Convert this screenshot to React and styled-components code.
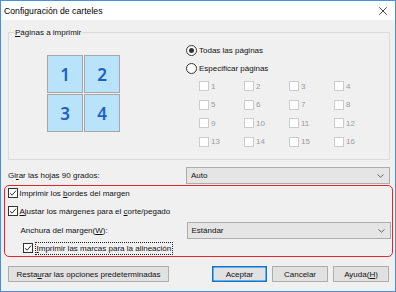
import React from 'react'
import styled, { createGlobalStyle, css } from 'styled-components'

const GlobalStyle = createGlobalStyle`
  html, body {
    margin: 0;
    padding: 0;
    background: #ffffff;
  }
  body {
    font-family: "Liberation Sans", Arial, sans-serif;
    color: #111;
  }
`

// ventana principal del dialogo
const Window = styled.div`
  width: 396px;
  height: 292px;
  box-sizing: border-box;
  border: 1px solid #4a90d9;
  display: flex;
  flex-direction: column;
  background: #f0f0f0;
  overflow: hidden;
`

const TitleBar = styled.div`
  height: 19px;
  flex: none;
  background: #ffffff;
  display: flex;
  align-items: center;
  justify-content: space-between;
  padding: 0 8px 0 3px;
  font-size: 8.7px;
  color: #000;
`

const Body = styled.div`
  flex: 1;
  display: flex;
  flex-direction: column;
  padding: 7px 5px 0 7px;
  font-size: 8px;
`

const Group = styled.fieldset`
  margin: 0;
  padding: 0;
  border: 1px solid #dcdcdc;
  min-width: 0;
`

const Legend = styled.legend`
  margin-left: 5px;
  padding: 0 1px;
  font-size: 8px;
  line-height: 11px;
`

const GroupInner = styled.div`
  display: flex;
  padding: 3px 0 8px 38px;
`

const TileGrid = styled.div`
  margin-top: 14px;
  align-self: flex-start;
  display: grid;
  grid-template-columns: 36px 36px;
  grid-auto-rows: 38px;
  gap: 1px;
`

const Tile = styled.div`
  box-sizing: border-box;
  background: #b9e2fb;
  border: 1px solid #a6a6a6;
  display: flex;
  align-items: center;
  justify-content: center;
  color: #1d5fc4;
  font-family: "Noto Sans", "Open Sans", sans-serif;
  font-weight: 600;
  font-size: 17px;
`

const PageOptions = styled.div`
  margin-left: 66px;
  display: flex;
  flex-direction: column;
`

const RadioRow = styled.label`
  height: 18px;
  display: flex;
  align-items: center;
`

const Radio = styled.span`
  width: 11px;
  height: 11px;
  box-sizing: border-box;
  border-radius: 50%;
  border: 1px solid #333;
  background: #fff;
  display: flex;
  align-items: center;
  justify-content: center;
  margin-right: 2px;

  &::after {
    content: '';
    width: 5px;
    height: 5px;
    border-radius: 50%;
    background: ${p => (p.$checked ? '#333' : 'transparent')};
  }
`

const PageGrid = styled.div`
  margin-left: 13px;
  display: grid;
  grid-template-columns: repeat(4, 45px);
  grid-auto-rows: 18.5px;
`

const PageCell = styled.div`
  display: flex;
  align-items: center;
  color: #9c9c9c;
`

const Box = styled.span`
  width: 10px;
  height: 10px;
  box-sizing: border-box;
  flex: none;
  background: #fff;
  border: 1px solid ${p => (p.$disabled ? '#cccccc' : '#333')};
  margin-right: 2px;
  display: flex;
  align-items: center;
  justify-content: center;
`

const FieldRow = styled.div`
  display: flex;
  align-items: center;
  justify-content: space-between;
  height: 17px;
  margin-top: ${p => p.$top || 0}px;
  padding-left: ${p => p.$indent || 0}px;
`

const Select = styled.div`
  width: 204px;
  height: 17px;
  box-sizing: border-box;
  background: #e5e5e5;
  border: 1px solid #adadad;
  display: flex;
  align-items: center;
  justify-content: space-between;
  padding: 0 5px 0 4px;
`

const Highlight = styled.div`
  margin: 1px -3px 0 -4px;
  border: 1.5px solid #e3262e;
  border-radius: 5px;
  padding: 0 1.5px 1px 2.5px;
  display: flex;
  flex-direction: column;
`

const CheckRow = styled.div`
  height: 14px;
  display: flex;
  align-items: center;
  margin-top: ${p => p.$top || 0}px;
  padding-left: ${p => p.$indent || 0}px;
`

const FocusText = styled.span`
  border: 1px dotted #222;
  padding: 0 1px;
  line-height: 11px;
`

const ButtonRow = styled.div`
  display: flex;
  margin-top: 9px;
  padding-right: 1px;
`

const Button = styled.button`
  height: 16px;
  box-sizing: border-box;
  width: ${p => p.$w}px;
  margin-left: ${p => p.$gap || 0}px;
  padding: 0;
  background: #e1e1e1;
  border: 1px solid #adadad;
  font-family: inherit;
  font-size: 8px;
  color: #111;
  ${p => p.$primary && css`
    border-color: #0078d7;
    box-shadow: inset 0 0 0 0.5px #0078d7;
  `}
`

const Spacer = styled.div`
  flex: 1;
`

const Check = () => (
  <svg width="8" height="8" viewBox="0 0 8 8">
    <path d="M1 4.2 L3.1 6.2 L7 1.6" fill="none" stroke="#333" strokeWidth="1" />
  </svg>
)

const Chevron = () => (
  <svg width="7" height="4" viewBox="0 0 7 4">
    <path d="M0.5 0.5 L3.5 3.2 L6.5 0.5" fill="none" stroke="#555" strokeWidth="0.9" />
  </svg>
)

const CloseIcon = () => (
  <svg width="8" height="8" viewBox="0 0 8 8">
    <path d="M0.3 0.3 L7.7 7.7 M7.7 0.3 L0.3 7.7" stroke="#333" strokeWidth="0.9" />
  </svg>
)

const pages = Array.from({ length: 16 }, (_, i) => i + 1)

export default function App() {
  return (
    <>
      <GlobalStyle />
      <Window>
        <TitleBar>
          <span>Configuración de carteles</span>
          <CloseIcon />
        </TitleBar>
        <Body>
          <Group>
            <Legend><u>P</u>áginas a imprimir</Legend>
            <GroupInner>
              <TileGrid>
                {[1, 2, 3, 4].map(n => (
                  <Tile key={n}>{n}</Tile>
                ))}
              </TileGrid>
              <PageOptions>
                <RadioRow>
                  <Radio $checked />
                  Todas las páginas
                </RadioRow>
                <RadioRow>
                  <Radio />
                  Especificar páginas
                </RadioRow>
                <PageGrid>
                  {pages.map(n => (
                    <PageCell key={n}>
                      <Box $disabled />
                      {n}
                    </PageCell>
                  ))}
                </PageGrid>
              </PageOptions>
            </GroupInner>
          </Group>

          <FieldRow $top={7}>
            <span>Gi<u>r</u>ar las hojas 90 grados:</span>
            <Select>
              <span>Auto</span>
              <Chevron />
            </Select>
          </FieldRow>

          <Highlight>
            <CheckRow>
              <Box><Check /></Box>
              <span>Imprimir los <u>b</u>ordes del margen</span>
            </CheckRow>
            <CheckRow $top={4}>
              <Box><Check /></Box>
              <span><u>A</u>justar los márgenes para el <u>c</u>orte/pegado</span>
            </CheckRow>
            <FieldRow $top={4} $indent={13}>
              <span>Anchura del margen(<u>W</u>):</span>
              <Select>
                <span>Estándar</span>
                <Chevron />
              </Select>
            </FieldRow>
            <CheckRow $top={2} $indent={15}>
              <Box><Check /></Box>
              <FocusText><u>I</u>mprimir las marcas para la alineación</FocusText>
            </CheckRow>
          </Highlight>

          <ButtonRow>
            <Button $w={161}>Resta<u>u</u>rar las opciones predeterminadas</Button>
            <Spacer />
            <Button $w={55} $primary>Aceptar</Button>
            <Button $w={56} $gap={5}>Cancelar</Button>
            <Button $w={56} $gap={5}>Ayuda(<u>H</u>)</Button>
          </ButtonRow>
        </Body>
      </Window>
    </>
  )
}
